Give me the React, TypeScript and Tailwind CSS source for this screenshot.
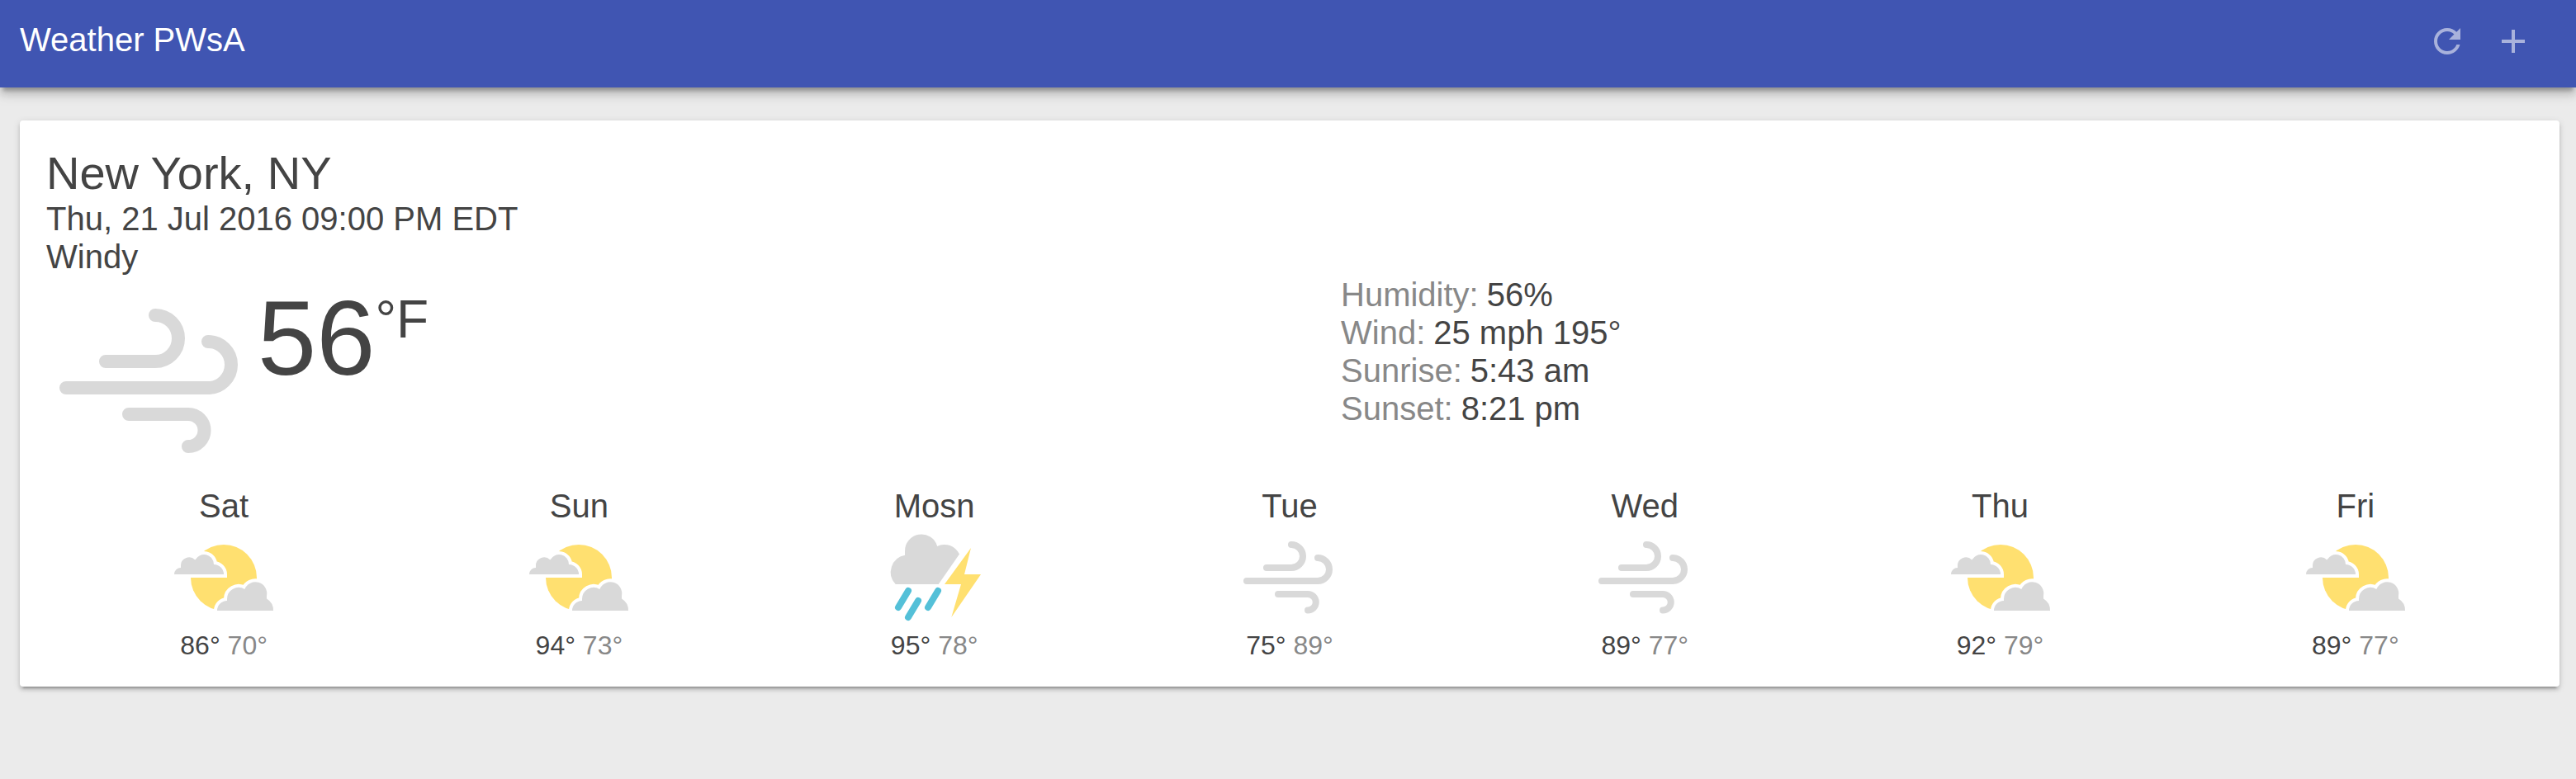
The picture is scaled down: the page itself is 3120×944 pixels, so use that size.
import React from "react";

type Condition = "windy" | "partly-cloudy" | "thunderstorm";

interface DayForecast {
  day: string;
  condition: Condition;
  high: number;
  low: number;
}

const details: [string, string][] = [
  ["Humidity:", "56%"],
  ["Wind:", "25 mph 195°"],
  ["Sunrise:", "5:43 am"],
  ["Sunset:", "8:21 pm"],
];

const forecast: DayForecast[] = [
  { day: "Sat", condition: "partly-cloudy", high: 86, low: 70 },
  { day: "Sun", condition: "partly-cloudy", high: 94, low: 73 },
  { day: "Mosn", condition: "thunderstorm", high: 95, low: 78 },
  { day: "Tue", condition: "windy", high: 75, low: 89 },
  { day: "Wed", condition: "windy", high: 89, low: 77 },
  { day: "Thu", condition: "partly-cloudy", high: 92, low: 79 },
  { day: "Fri", condition: "partly-cloudy", high: 89, low: 77 },
];

function WindDrawing() {
  return (
    <g fill="none" stroke="#d9d9d9" strokeWidth="8" strokeLinecap="round">
      <path d="M66 24a14 14 0 0 1 0 28H36" />
      <path d="M98 40a14 14 0 0 1 0 28H12" />
      <path d="M50 84H86a9.75 9.75 0 0 1 0 19.5" />
    </g>
  );
}

function PartlyCloudyDrawing() {
  return (
    <g>
      <circle cx="64" cy="64" r="40" fill="#ffe070" />
      <g fill="#d9d9d9" stroke="#fff" strokeWidth="8" style={{ paintOrder: "stroke" }}>
        <path d="M4 60A8 8 0 0 1 12 52V50A10 10 0 0 1 29.3 42.6A12 12 0 0 1 52 48A12 12 0 0 1 64 60Z" />
        <path d="M56 104A12 12 0 0 1 68 92V90A14 14 0 0 1 89.3 78A14 14 0 0 1 116 86V89.4A16.5 16.5 0 0 1 124 104Z" />
      </g>
    </g>
  );
}

function ThunderstormDrawing() {
  return (
    <g>
      <path
        fill="#d9d9d9"
        d="M16.7 72A21 21 0 0 1 28 36.8V32A20 20 0 0 1 67.2 25.9A20 20 0 0 1 94 35.5L68.7 72Z"
      />
      <path fill="#ffe070" d="M108 28L76 72H96L84.3 112L120 60H100Z" />
      <path
        stroke="#54c0d8"
        strokeWidth="8"
        strokeLinecap="round"
        d="M32 80L20 100M44 92L32 112M68 80L56 100"
      />
    </g>
  );
}

function WeatherIcon({ condition, className }: { condition: Condition; className: string }) {
  return (
    <svg viewBox="0 0 128 128" className={className} role="img" aria-label={condition}>
      {condition === "windy" && <WindDrawing />}
      {condition === "partly-cloudy" && <PartlyCloudyDrawing />}
      {condition === "thunderstorm" && <ThunderstormDrawing />}
    </svg>
  );
}

function HeaderButton({ label, path }: { label: string; path: string }) {
  return (
    <button type="button" aria-label={label} className="text-white opacity-55">
      <svg viewBox="0 0 24 24" className="block size-12" fill="currentColor">
        <path d={path} />
      </svg>
    </button>
  );
}

export default function App() {
  return (
    <div className="min-h-screen bg-[#ebebeb] font-['Liberation_Sans',Arial,sans-serif] text-[#444]">
      <header className="relative flex h-[106px] items-center bg-[#4055b2] pr-[52px] pb-1.5 pl-6 text-white shadow-[0_8px_10px_0_rgba(0,0,0,0.14),0_4px_18px_2px_rgba(0,0,0,0.12),0_8px_4px_-4px_rgba(0,0,0,0.2)]">
        <h1 className="flex-1 pb-1 text-[40px] leading-[46px]">Weather PWsA</h1>
        <div className="flex gap-8">
          <HeaderButton
            label="Refresh"
            path="M17.65 6.35C16.2 4.9 14.21 4 12 4c-4.42 0-7.99 3.58-7.99 8s3.57 8 7.99 8c3.73 0 6.84-2.55 7.73-6h-2.08c-.82 2.33-3.04 4-5.65 4-3.31 0-6-2.69-6-6s2.69-6 6-6c1.66 0 3.14.69 4.22 1.78L13 11h7V4l-2.35 2.35z"
          />
          <HeaderButton label="Add" path="M19 13h-6v6h-2v-6H5v-2h6V5h2v6h6v2z" />
        </div>
      </header>

      <main className="pt-10 pr-5 pl-6">
        <section className="rounded bg-white p-8 shadow-[0_4px_4px_0_rgba(0,0,0,0.14),0_6px_2px_-4px_rgba(0,0,0,0.2),0_2px_10px_0_rgba(0,0,0,0.12)]">
          <h2 className="text-[56px] leading-16">New York, NY</h2>
          <p className="text-[40px] leading-[46px]">Thu, 21 Jul 2016 09:00 PM EDT</p>
          <p className="text-[40px] leading-[46px]">Windy</p>

          <div className="grid grid-cols-2">
            <div className="flex items-start">
              <WeatherIcon condition="windy" className="size-64" />
              <span className="text-[128px] leading-[152px]">56</span>
              <span className="text-[64px] leading-[106px]">°F</span>
            </div>
            <dl className="pl-[62px] text-[40px] leading-[46px]">
              {details.map(([label, value]) => (
                <div key={label} className="flex gap-2.5">
                  <dt className="text-[#888]">{label}</dt>
                  <dd>{value}</dd>
                </div>
              ))}
            </dl>
          </div>

          <ul className="grid grid-cols-7">
            {forecast.map((item) => (
              <li key={item.day} className="flex flex-col items-center">
                <span className="text-[40px] leading-[46px]">{item.day}</span>
                <WeatherIcon condition={item.condition} className="size-32" />
                <span className="text-[32px] leading-9">
                  {item.high}° <span className="text-[#888]">{item.low}°</span>
                </span>
              </li>
            ))}
          </ul>
        </section>
      </main>
    </div>
  );
}
